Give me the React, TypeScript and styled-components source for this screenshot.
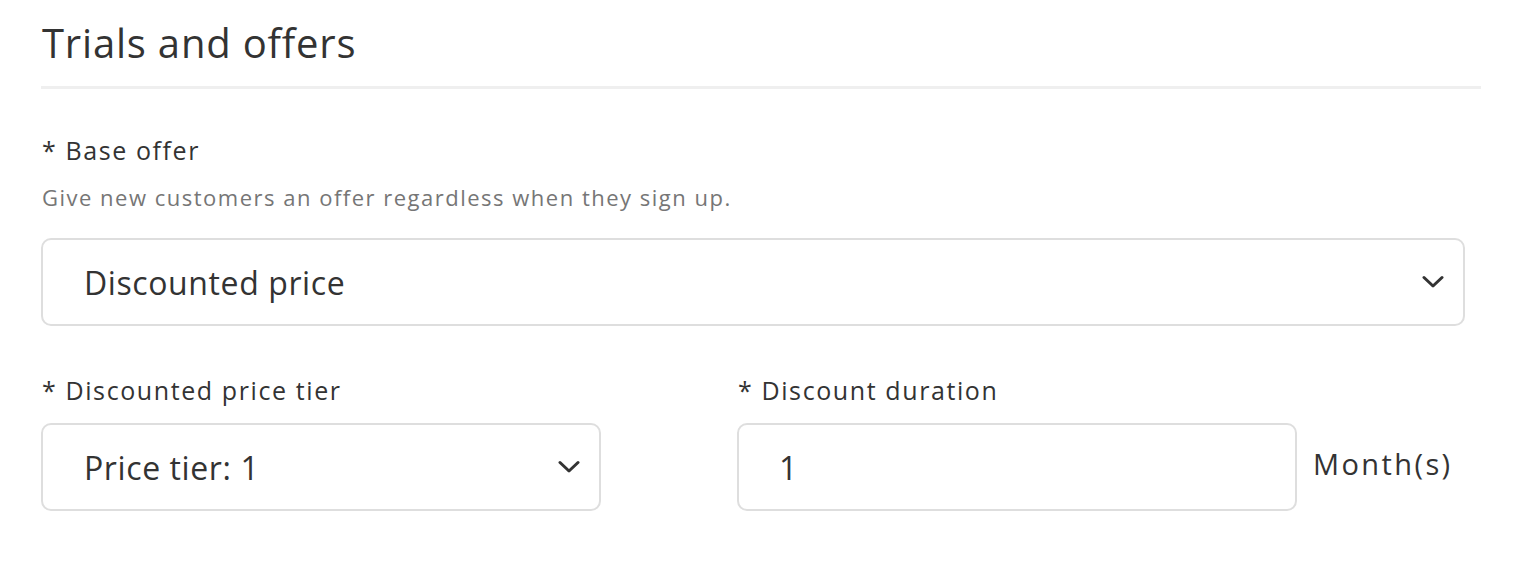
import React from "react";
import styled, { createGlobalStyle } from "styled-components";

const Global = createGlobalStyle`
  html, body { margin: 0; padding: 0; background: #ffffff; }
  body { font-family: "Open Sans", "Noto Sans", sans-serif; color: #333333; }
  * { box-sizing: border-box; }
`;

const Page = styled.div`
  padding: 19px 39px 0 41px;
  width: 1520px;
`;

const Title = styled.h2`
  margin: 0;
  font-size: 40px;
  font-weight: 400;
  letter-spacing: 0.8px;
  color: #333333;
  line-height: 48px;
  padding-left: 1px;
`;

const Divider = styled.div`
  height: 3px;
  background: #efefef;
  margin-top: 19px;
`;

const Section = styled.section<{ $top: number }>`
  margin-top: ${(p) => p.$top}px;
`;

const Field = styled.div`
  display: flex;
  flex-direction: column;
`;

const Label = styled.label<{ $gap?: number }>`
  font-size: 25px;
  line-height: 30px;
  letter-spacing: 1.6px;
  color: #333333;
  padding-left: 1px;
  margin-bottom: ${(p) => p.$gap ?? 0}px;
`;

const Hint = styled.div`
  font-size: 22px;
  line-height: 26px;
  letter-spacing: 1.5px;
  color: #767676;
  margin-top: 19px;
  margin-bottom: 28px;
  padding-left: 1px;
`;

const SelectBox = styled.div<{ $width?: number }>`
  display: flex;
  align-items: center;
  justify-content: space-between;
  height: 88px;
  width: ${(p) => (p.$width ? `${p.$width}px` : "1424px")};
  border: 2px solid #dedede;
  border-radius: 10px;
  padding: 0 19px 0 41px;
  font-size: 32px;
  letter-spacing: 0.6px;
  color: #333333;
  background: #fff;
`;

const InputBox = styled.div`
  display: flex;
  align-items: center;
  height: 88px;
  width: 560px;
  border: 2px solid #dedede;
  border-radius: 10px;
  padding: 0 40px;
  font-size: 32px;
  color: #333333;
`;

const Row = styled.div`
  display: flex;
  gap: 136px;
  margin-top: 49px;
`;

const Inline = styled.div`
  display: flex;
  align-items: center;
  gap: 16px;
`;

const Unit = styled.span`
  font-size: 29px;
  letter-spacing: 2.4px;
  color: #333333;
  margin-bottom: 8px;
`;

const Chevron = () => (
  <svg width="22" height="14" viewBox="0 0 22 14" fill="none">
    <path d="M2 2.5 L11 11 L20 2.5" stroke="#333333" strokeWidth="3" strokeLinecap="round" strokeLinejoin="round" />
  </svg>
);

export default function App() {
  return (
    <>
      <Global />
      <Page>
        <Title>Trials and offers</Title>
        <Divider />
        <Section $top={46}>
          <Field>
            <Label>* Base offer</Label>
            <Hint>Give new customers an offer regardless when they sign up.</Hint>
            <SelectBox>
              <span>Discounted price</span>
              <Chevron />
            </SelectBox>
          </Field>
        </Section>
        <Row>
          <Field>
            <Label $gap={18}>* Discounted price tier</Label>
            <SelectBox $width={560}>
              <span>Price tier: 1</span>
              <Chevron />
            </SelectBox>
          </Field>
          <Field>
            <Label $gap={18}>* Discount duration</Label>
            <Inline>
              <InputBox>1</InputBox>
              <Unit>Month(s)</Unit>
            </Inline>
          </Field>
        </Row>
      </Page>
    </>
  );
}
